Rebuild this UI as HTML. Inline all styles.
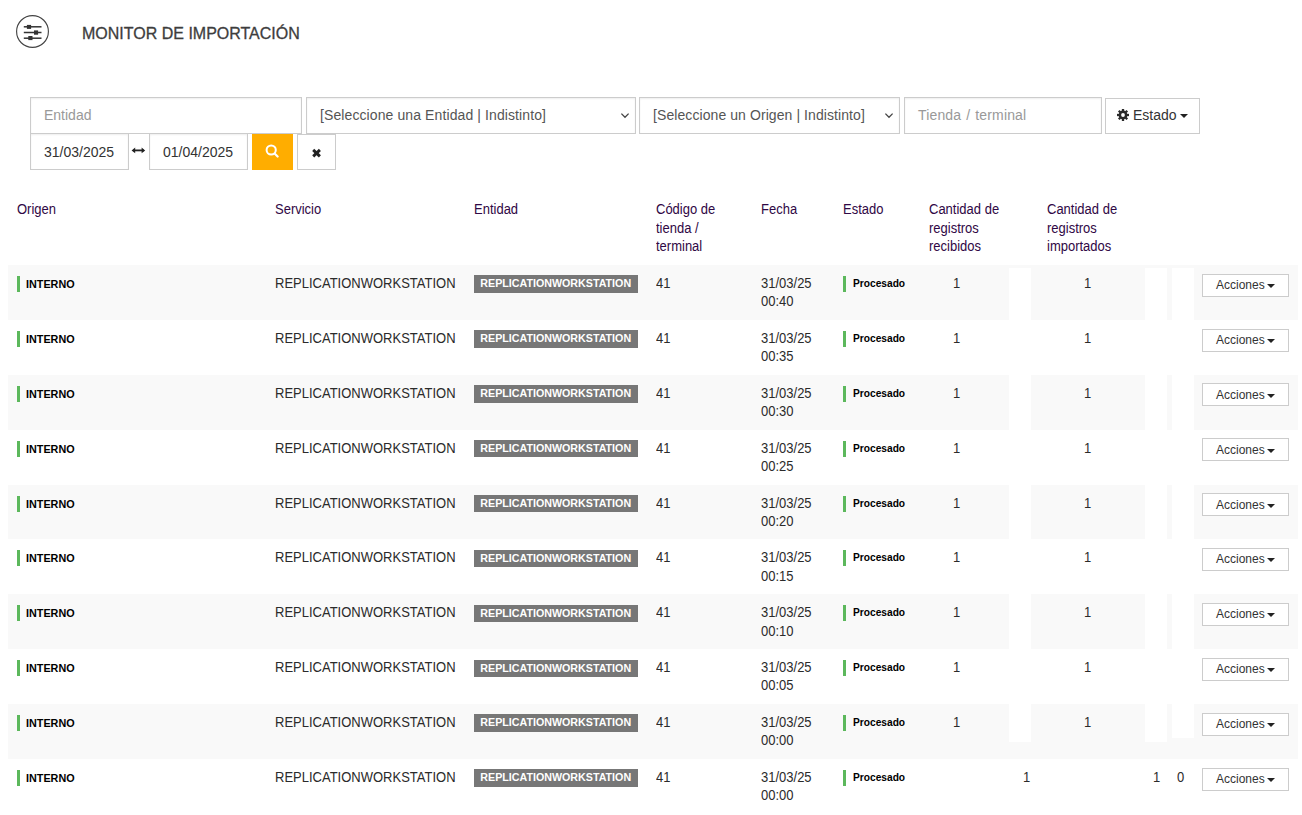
<!DOCTYPE html>
<html><head><meta charset="utf-8"><title>Monitor de importación</title><style>
*{box-sizing:border-box;margin:0;padding:0}
html,body{width:1302px;height:815px;overflow:hidden;background:#fff}
body{font-family:"Liberation Sans",sans-serif;color:#333;position:relative}
.a{position:absolute;white-space:nowrap}
.title{left:82px;top:24px;font-size:16px;line-height:20px;color:#3d3d3d;-webkit-text-stroke:0.3px #3d3d3d}
.inp{border:1px solid #ccc;background:#fff;height:37px;font-size:14px;line-height:35px;padding-left:13px;color:#555;box-shadow:inset 0 1px 2px rgba(0,0,0,.07)}
.ph{color:#999}
.btnY{background:#ffad00}
.hd,.t13{font-size:13px;line-height:18px;transform:scaleY(1.1);transform-origin:0 4.5px}
.hd{color:#300845}
.t13{color:#2b2b2b}
.row{position:absolute;left:8px;width:1290px;height:54.875px}
.row.s{background:#f9f9f9}
.gb{position:absolute;width:3px;height:16px;background:#5cb85c}
.b10{font-weight:bold;color:#000;line-height:14px}
.lbl{background:#777;color:#fff;font-weight:bold;font-size:10.7px;height:17.4px;line-height:17.4px;padding:0 6.5px 0 6.3px}
.btn{border:1px solid #ccc;background:#fff}
.wp{position:absolute;background:#fff}
</style></head><body>
<svg class="a" style="left:0;top:0" width="60" height="60" viewBox="0 0 60 60">
<circle cx="32.5" cy="31.5" r="15.9" fill="none" stroke="#444" stroke-width="1.15"/>
<g stroke="#333" stroke-width="1.5" fill="none"><line x1="23.8" y1="26.8" x2="41.5" y2="26.8"/><line x1="23.8" y1="32.5" x2="41.5" y2="32.5"/><line x1="23.8" y1="38.2" x2="41.5" y2="38.2"/></g>
<g fill="#333"><rect x="26.9" y="24.9" width="4.2" height="4"/><rect x="34" y="30.4" width="4.1" height="4.3"/><rect x="28.3" y="36" width="4.2" height="4.1"/></g>
</svg>
<div class="a title">MONITOR DE IMPORTACIÓN</div>
<div class="a inp ph" style="left:30px;top:97px;width:272px">Entidad</div>
<div class="a inp" style="left:306px;top:97px;width:330px;letter-spacing:0.1px">[Seleccione una Entidad | Indistinto]</div>
<svg class="a" style="left:620px;top:112px" width="10" height="7" viewBox="0 0 10 7"><polyline points="1.4,1.6 5,5.3 8.6,1.6" fill="none" stroke="#444" stroke-width="1.25"/></svg>
<div class="a inp" style="left:639px;top:97px;width:261px;letter-spacing:0.08px">[Seleccione un Origen | Indistinto]</div>
<svg class="a" style="left:884px;top:112px" width="10" height="7" viewBox="0 0 10 7"><polyline points="1.4,1.6 5,5.3 8.6,1.6" fill="none" stroke="#444" stroke-width="1.25"/></svg>
<div class="a inp ph" style="left:904px;top:97px;width:198px;letter-spacing:0.15px;word-spacing:1px">Tienda / terminal</div>
<div class="a btn" style="left:1105px;top:98px;width:95px;height:36px"></div>
<svg class="a" style="left:1117px;top:109px" width="12" height="12" viewBox="0 0 12 12"><g fill="#2a2a2a"><circle cx="6" cy="6" r="4.4"/><rect x="4.85" y="0" width="2.3" height="12" transform="rotate(0 6 6)"/><rect x="4.85" y="0" width="2.3" height="12" transform="rotate(45 6 6)"/><rect x="4.85" y="0" width="2.3" height="12" transform="rotate(90 6 6)"/><rect x="4.85" y="0" width="2.3" height="12" transform="rotate(135 6 6)"/></g><circle cx="6" cy="6" r="1.9" fill="#fff"/></svg>
<div class="a" style="left:1133px;top:106px;font-size:14px;line-height:18px;color:#333">Estado</div>
<svg class="a" style="left:1180px;top:114px" width="8" height="4" viewBox="0 0 8 4"><polygon points="0,0 8,0 4,4" fill="#222"/></svg>
<div class="a inp" style="left:30px;top:133px;width:99px;color:#333;line-height:37px">31/03/2025</div>
<svg class="a" style="left:131px;top:146px" width="15" height="9" viewBox="0 0 15 9"><g fill="#222"><rect x="2" y="3.5" width="11" height="1.8"/><polygon points="0.6,4.4 4.2,1.6 4.2,7.2"/><polygon points="14.2,4.4 10.6,1.6 10.6,7.2"/></g></svg>
<div class="a inp" style="left:149px;top:133px;width:99px;color:#333;line-height:37px">01/04/2025</div>
<div class="a btnY" style="left:252px;top:134px;width:41px;height:36px"></div>
<svg class="a" style="left:265px;top:144px" width="14" height="14" viewBox="0 0 14 14"><circle cx="6.2" cy="6" r="4.6" fill="none" stroke="#fff" stroke-width="2"/><line x1="9.6" y1="9.5" x2="12.6" y2="12.5" stroke="#fff" stroke-width="2.2" stroke-linecap="round"/></svg>
<div class="a btn" style="left:297px;top:134px;width:39px;height:36px"></div>
<svg class="a" style="left:311px;top:147.5px" width="11" height="10" viewBox="0 0 11 10"><g stroke="#222" stroke-width="2.9"><line x1="2.2" y1="1.9" x2="8.9" y2="8.4"/><line x1="8.9" y1="1.9" x2="2.2" y2="8.4"/></g></svg>
<div class="a hd" style="left:17px;top:200.00px">Origen</div>
<div class="a hd" style="left:275px;top:200.00px">Servicio</div>
<div class="a hd" style="left:474px;top:200.00px">Entidad</div>
<div class="a hd" style="left:656px;top:200.00px">Código de</div>
<div class="a hd" style="left:656px;top:218.57px">tienda /</div>
<div class="a hd" style="left:656px;top:237.14px">terminal</div>
<div class="a hd" style="left:761px;top:200.00px">Fecha</div>
<div class="a hd" style="left:843px;top:200.00px">Estado</div>
<div class="a hd" style="left:929px;top:200.00px">Cantidad de</div>
<div class="a hd" style="left:929px;top:218.57px">registros</div>
<div class="a hd" style="left:929px;top:237.14px">recibidos</div>
<div class="a hd" style="left:1047px;top:200.00px">Cantidad de</div>
<div class="a hd" style="left:1047px;top:218.57px">registros</div>
<div class="a hd" style="left:1047px;top:237.14px">importados</div>
<div class="row s" style="top:265.00px"></div>
<div class="row" style="top:319.88px"></div>
<div class="row s" style="top:374.75px"></div>
<div class="row" style="top:429.62px"></div>
<div class="row s" style="top:484.50px"></div>
<div class="row" style="top:539.38px"></div>
<div class="row s" style="top:594.25px"></div>
<div class="row" style="top:649.12px"></div>
<div class="row s" style="top:704.00px"></div>
<div class="row" style="top:758.88px"></div>
<div class="wp" style="left:1009px;top:268px;width:22px;height:474.4px"></div>
<div class="wp" style="left:1145px;top:268px;width:22px;height:474.4px"></div>
<div class="wp" style="left:1172px;top:268px;width:22px;height:470.2px"></div>
<div class="gb" style="left:17px;top:276.00px"></div>
<div class="a b10" style="left:26px;top:277.00px;font-size:10.8px">INTERNO</div>
<div class="a t13" style="left:275px;top:274.00px">REPLICATIONWORKSTATION</div>
<div class="a lbl" style="left:474px;top:275.40px">REPLICATIONWORKSTATION</div>
<div class="a t13" style="left:656px;top:274.00px">41</div>
<div class="a t13" style="left:761px;top:274.00px">31/03/25</div>
<div class="a t13" style="left:761px;top:292.30px">00:40</div>
<div class="gb" style="left:843px;top:276.00px"></div>
<div class="a b10" style="left:853px;top:277.00px;font-size:10.2px">Procesado</div>
<div class="a t13" style="left:953px;top:274.00px">1</div>
<div class="a t13" style="left:1084px;top:274.00px">1</div>
<div class="a btn" style="left:1202px;top:273.70px;width:87px;height:23px"></div>
<div class="a" style="left:1216px;top:277.00px;font-size:12px;line-height:16px;color:#333">Acciones</div>
<svg class="a" style="left:1267px;top:284.00px" width="8" height="4" viewBox="0 0 8 4"><polygon points="0,0 8,0 4,4" fill="#222"/></svg>
<div class="gb" style="left:17px;top:330.88px"></div>
<div class="a b10" style="left:26px;top:331.88px;font-size:10.8px">INTERNO</div>
<div class="a t13" style="left:275px;top:328.88px">REPLICATIONWORKSTATION</div>
<div class="a lbl" style="left:474px;top:330.27px">REPLICATIONWORKSTATION</div>
<div class="a t13" style="left:656px;top:328.88px">41</div>
<div class="a t13" style="left:761px;top:328.88px">31/03/25</div>
<div class="a t13" style="left:761px;top:347.18px">00:35</div>
<div class="gb" style="left:843px;top:330.88px"></div>
<div class="a b10" style="left:853px;top:331.88px;font-size:10.2px">Procesado</div>
<div class="a t13" style="left:953px;top:328.88px">1</div>
<div class="a t13" style="left:1084px;top:328.88px">1</div>
<div class="a btn" style="left:1202px;top:328.57px;width:87px;height:23px"></div>
<div class="a" style="left:1216px;top:331.88px;font-size:12px;line-height:16px;color:#333">Acciones</div>
<svg class="a" style="left:1267px;top:338.88px" width="8" height="4" viewBox="0 0 8 4"><polygon points="0,0 8,0 4,4" fill="#222"/></svg>
<div class="gb" style="left:17px;top:385.75px"></div>
<div class="a b10" style="left:26px;top:386.75px;font-size:10.8px">INTERNO</div>
<div class="a t13" style="left:275px;top:383.75px">REPLICATIONWORKSTATION</div>
<div class="a lbl" style="left:474px;top:385.15px">REPLICATIONWORKSTATION</div>
<div class="a t13" style="left:656px;top:383.75px">41</div>
<div class="a t13" style="left:761px;top:383.75px">31/03/25</div>
<div class="a t13" style="left:761px;top:402.05px">00:30</div>
<div class="gb" style="left:843px;top:385.75px"></div>
<div class="a b10" style="left:853px;top:386.75px;font-size:10.2px">Procesado</div>
<div class="a t13" style="left:953px;top:383.75px">1</div>
<div class="a t13" style="left:1084px;top:383.75px">1</div>
<div class="a btn" style="left:1202px;top:383.45px;width:87px;height:23px"></div>
<div class="a" style="left:1216px;top:386.75px;font-size:12px;line-height:16px;color:#333">Acciones</div>
<svg class="a" style="left:1267px;top:393.75px" width="8" height="4" viewBox="0 0 8 4"><polygon points="0,0 8,0 4,4" fill="#222"/></svg>
<div class="gb" style="left:17px;top:440.62px"></div>
<div class="a b10" style="left:26px;top:441.62px;font-size:10.8px">INTERNO</div>
<div class="a t13" style="left:275px;top:438.62px">REPLICATIONWORKSTATION</div>
<div class="a lbl" style="left:474px;top:440.02px">REPLICATIONWORKSTATION</div>
<div class="a t13" style="left:656px;top:438.62px">41</div>
<div class="a t13" style="left:761px;top:438.62px">31/03/25</div>
<div class="a t13" style="left:761px;top:456.93px">00:25</div>
<div class="gb" style="left:843px;top:440.62px"></div>
<div class="a b10" style="left:853px;top:441.62px;font-size:10.2px">Procesado</div>
<div class="a t13" style="left:953px;top:438.62px">1</div>
<div class="a t13" style="left:1084px;top:438.62px">1</div>
<div class="a btn" style="left:1202px;top:438.32px;width:87px;height:23px"></div>
<div class="a" style="left:1216px;top:441.62px;font-size:12px;line-height:16px;color:#333">Acciones</div>
<svg class="a" style="left:1267px;top:448.62px" width="8" height="4" viewBox="0 0 8 4"><polygon points="0,0 8,0 4,4" fill="#222"/></svg>
<div class="gb" style="left:17px;top:495.50px"></div>
<div class="a b10" style="left:26px;top:496.50px;font-size:10.8px">INTERNO</div>
<div class="a t13" style="left:275px;top:493.50px">REPLICATIONWORKSTATION</div>
<div class="a lbl" style="left:474px;top:494.90px">REPLICATIONWORKSTATION</div>
<div class="a t13" style="left:656px;top:493.50px">41</div>
<div class="a t13" style="left:761px;top:493.50px">31/03/25</div>
<div class="a t13" style="left:761px;top:511.80px">00:20</div>
<div class="gb" style="left:843px;top:495.50px"></div>
<div class="a b10" style="left:853px;top:496.50px;font-size:10.2px">Procesado</div>
<div class="a t13" style="left:953px;top:493.50px">1</div>
<div class="a t13" style="left:1084px;top:493.50px">1</div>
<div class="a btn" style="left:1202px;top:493.20px;width:87px;height:23px"></div>
<div class="a" style="left:1216px;top:496.50px;font-size:12px;line-height:16px;color:#333">Acciones</div>
<svg class="a" style="left:1267px;top:503.50px" width="8" height="4" viewBox="0 0 8 4"><polygon points="0,0 8,0 4,4" fill="#222"/></svg>
<div class="gb" style="left:17px;top:550.38px"></div>
<div class="a b10" style="left:26px;top:551.38px;font-size:10.8px">INTERNO</div>
<div class="a t13" style="left:275px;top:548.38px">REPLICATIONWORKSTATION</div>
<div class="a lbl" style="left:474px;top:549.77px">REPLICATIONWORKSTATION</div>
<div class="a t13" style="left:656px;top:548.38px">41</div>
<div class="a t13" style="left:761px;top:548.38px">31/03/25</div>
<div class="a t13" style="left:761px;top:566.67px">00:15</div>
<div class="gb" style="left:843px;top:550.38px"></div>
<div class="a b10" style="left:853px;top:551.38px;font-size:10.2px">Procesado</div>
<div class="a t13" style="left:953px;top:548.38px">1</div>
<div class="a t13" style="left:1084px;top:548.38px">1</div>
<div class="a btn" style="left:1202px;top:548.08px;width:87px;height:23px"></div>
<div class="a" style="left:1216px;top:551.38px;font-size:12px;line-height:16px;color:#333">Acciones</div>
<svg class="a" style="left:1267px;top:558.38px" width="8" height="4" viewBox="0 0 8 4"><polygon points="0,0 8,0 4,4" fill="#222"/></svg>
<div class="gb" style="left:17px;top:605.25px"></div>
<div class="a b10" style="left:26px;top:606.25px;font-size:10.8px">INTERNO</div>
<div class="a t13" style="left:275px;top:603.25px">REPLICATIONWORKSTATION</div>
<div class="a lbl" style="left:474px;top:604.65px">REPLICATIONWORKSTATION</div>
<div class="a t13" style="left:656px;top:603.25px">41</div>
<div class="a t13" style="left:761px;top:603.25px">31/03/25</div>
<div class="a t13" style="left:761px;top:621.55px">00:10</div>
<div class="gb" style="left:843px;top:605.25px"></div>
<div class="a b10" style="left:853px;top:606.25px;font-size:10.2px">Procesado</div>
<div class="a t13" style="left:953px;top:603.25px">1</div>
<div class="a t13" style="left:1084px;top:603.25px">1</div>
<div class="a btn" style="left:1202px;top:602.95px;width:87px;height:23px"></div>
<div class="a" style="left:1216px;top:606.25px;font-size:12px;line-height:16px;color:#333">Acciones</div>
<svg class="a" style="left:1267px;top:613.25px" width="8" height="4" viewBox="0 0 8 4"><polygon points="0,0 8,0 4,4" fill="#222"/></svg>
<div class="gb" style="left:17px;top:660.12px"></div>
<div class="a b10" style="left:26px;top:661.12px;font-size:10.8px">INTERNO</div>
<div class="a t13" style="left:275px;top:658.12px">REPLICATIONWORKSTATION</div>
<div class="a lbl" style="left:474px;top:659.52px">REPLICATIONWORKSTATION</div>
<div class="a t13" style="left:656px;top:658.12px">41</div>
<div class="a t13" style="left:761px;top:658.12px">31/03/25</div>
<div class="a t13" style="left:761px;top:676.42px">00:05</div>
<div class="gb" style="left:843px;top:660.12px"></div>
<div class="a b10" style="left:853px;top:661.12px;font-size:10.2px">Procesado</div>
<div class="a t13" style="left:953px;top:658.12px">1</div>
<div class="a t13" style="left:1084px;top:658.12px">1</div>
<div class="a btn" style="left:1202px;top:657.83px;width:87px;height:23px"></div>
<div class="a" style="left:1216px;top:661.12px;font-size:12px;line-height:16px;color:#333">Acciones</div>
<svg class="a" style="left:1267px;top:668.12px" width="8" height="4" viewBox="0 0 8 4"><polygon points="0,0 8,0 4,4" fill="#222"/></svg>
<div class="gb" style="left:17px;top:715.00px"></div>
<div class="a b10" style="left:26px;top:716.00px;font-size:10.8px">INTERNO</div>
<div class="a t13" style="left:275px;top:713.00px">REPLICATIONWORKSTATION</div>
<div class="a lbl" style="left:474px;top:714.40px">REPLICATIONWORKSTATION</div>
<div class="a t13" style="left:656px;top:713.00px">41</div>
<div class="a t13" style="left:761px;top:713.00px">31/03/25</div>
<div class="a t13" style="left:761px;top:731.30px">00:00</div>
<div class="gb" style="left:843px;top:715.00px"></div>
<div class="a b10" style="left:853px;top:716.00px;font-size:10.2px">Procesado</div>
<div class="a t13" style="left:953px;top:713.00px">1</div>
<div class="a t13" style="left:1084px;top:713.00px">1</div>
<div class="a btn" style="left:1202px;top:712.70px;width:87px;height:23px"></div>
<div class="a" style="left:1216px;top:716.00px;font-size:12px;line-height:16px;color:#333">Acciones</div>
<svg class="a" style="left:1267px;top:723.00px" width="8" height="4" viewBox="0 0 8 4"><polygon points="0,0 8,0 4,4" fill="#222"/></svg>
<div class="gb" style="left:17px;top:769.88px"></div>
<div class="a b10" style="left:26px;top:770.88px;font-size:10.8px">INTERNO</div>
<div class="a t13" style="left:275px;top:767.88px">REPLICATIONWORKSTATION</div>
<div class="a lbl" style="left:474px;top:769.27px">REPLICATIONWORKSTATION</div>
<div class="a t13" style="left:656px;top:767.88px">41</div>
<div class="a t13" style="left:761px;top:767.88px">31/03/25</div>
<div class="a t13" style="left:761px;top:786.17px">00:00</div>
<div class="gb" style="left:843px;top:769.88px"></div>
<div class="a b10" style="left:853px;top:770.88px;font-size:10.2px">Procesado</div>
<div class="a t13" style="left:1023px;top:767.88px">1</div>
<div class="a t13" style="left:1153px;top:767.88px">1</div>
<div class="a t13" style="left:1177px;top:767.88px">0</div>
<div class="a btn" style="left:1202px;top:767.58px;width:87px;height:23px"></div>
<div class="a" style="left:1216px;top:770.88px;font-size:12px;line-height:16px;color:#333">Acciones</div>
<svg class="a" style="left:1267px;top:777.88px" width="8" height="4" viewBox="0 0 8 4"><polygon points="0,0 8,0 4,4" fill="#222"/></svg>
</body></html>
